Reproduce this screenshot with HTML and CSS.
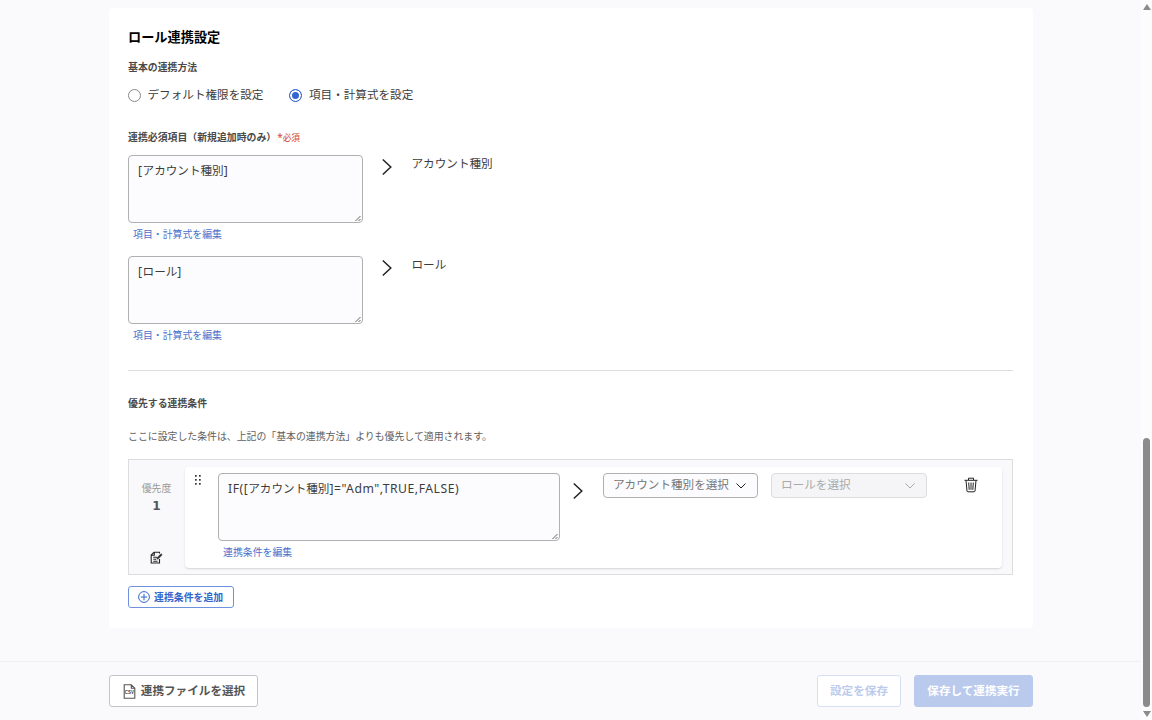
FILE: index.html
```html
<!DOCTYPE html>
<html lang="ja">
<head>
<meta charset="utf-8">
<title>ロール連携設定</title>
<link rel="stylesheet" href="styles.css">
</head>
<body>
<svg class="defs" width="0" height="0">
  <symbol id="chevron" viewBox="0 0 12 18"><path d="M1.8 1.500 9.800 9 1.800 16.500"/></symbol>
  <symbol id="caret" viewBox="0 0 12 8"><path d="M1.500 1.500 6 6 10.500 1.500"/></symbol>
  <symbol id="grip" viewBox="0 0 7 7"><path d="M.5 6 5.500 1M3.500 6 5.500 4"/></symbol>
</svg>
<div class="page">
  <main class="content">
    <section class="card">
      <h1 class="title">ロール連携設定</h1>
      <h2 class="label">基本の連携方法</h2>
      <div class="radios">
        <label class="radio"><span class="dot"></span>デフォルト権限を設定</label>
        <label class="radio"><span class="dot dot-on"></span>項目・計算式を設定</label>
      </div>
      <h2 class="label label-fields">連携必須項目（新規追加時のみ）<span class="required"><span class="star">*</span>必須</span></h2>
      <div class="mapping">
        <div class="field">
          <div class="area"><span class="code">[</span>アカウント種別<span class="code">]</span><svg class="grip"><use href="#grip"/></svg></div>
          <a class="link">項目・計算式を編集</a>
        </div>
        <svg class="chevron"><use href="#chevron"/></svg>
        <span class="target">アカウント種別</span>
      </div>
      <div class="mapping">
        <div class="field">
          <div class="area"><span class="code">[</span>ロール<span class="code">]</span><svg class="grip"><use href="#grip"/></svg></div>
          <a class="link">項目・計算式を編集</a>
        </div>
        <svg class="chevron"><use href="#chevron"/></svg>
        <span class="target">ロール</span>
      </div>
      <div class="divider"></div>
      <h2 class="label">優先する連携条件</h2>
      <p class="note">ここに設定した条件は、上記の「基本の連携方法」よりも優先して適用されます。</p>
      <div class="rules">
        <div class="priority">
          <span class="priority-name">優先度</span>
          <span class="priority-number">1</span>
          <svg class="memo" viewBox="0 0 13 13"><path d="M9.500 8V12H1.200V4L4 1.200H9.500V2.500M4.300 1.500V4.200H1.500M3.300 6.200H7M3.300 8.200H6M3.300 10.200H7.500"/><path d="M6.800 8.300 7.300 6.500 11 2.700 12.200 3.800 8.500 7.700Z" fill="#333" stroke-width=".5"/></svg>
        </div>
        <div class="rule">
          <svg class="handle" viewBox="0 0 6 10"><g fill="#333"><rect x="0" y="0" width="1.700" height="1.700"/><rect x="4" y="0" width="1.700" height="1.700"/><rect x="0" y="4" width="1.700" height="1.700"/><rect x="4" y="4" width="1.700" height="1.700"/><rect x="0" y="8" width="1.700" height="1.700"/><rect x="4" y="8" width="1.700" height="1.700"/></g></svg>
          <div class="field field-wide">
            <div class="area"><span class="code">IF([</span>アカウント種別<span class="code">]="Adm",TRUE,FALSE)</span><svg class="grip"><use href="#grip"/></svg></div>
            <a class="link">連携条件を編集</a>
          </div>
          <svg class="chevron"><use href="#chevron"/></svg>
          <div class="select select-account">アカウント種別を選択<svg class="caret"><use href="#caret"/></svg></div>
          <div class="select select-off">ロールを選択<svg class="caret"><use href="#caret"/></svg></div>
          <svg class="trash" viewBox="0 0 14 16"><path d="M.5 3.300H13.500M4.500 3V1.200H9.500V3M2 3.500 3 14Q3.100 14.800 4 14.800H10Q10.900 14.800 11 14L12 3.500M4.700 5.500 5.200 12.800M7 5.500V12.800M9.300 5.500 8.800 12.800"/></svg>
        </div>
      </div>
      <button class="add"><svg class="plus" viewBox="0 0 12 12"><circle cx="6" cy="6" r="5.400"/><path d="M6 2.800V9.200M2.800 6H9.200"/></svg>連携条件を追加</button>
    </section>
  </main>
  <footer class="footer">
    <button class="btn btn-file"><svg class="csv" viewBox="0 0 13 15"><path d="M1.200.8H8.300L11.800 4.200V14.200H1.200ZM8.300.8V4.200H11.800"/><text x="6.500" y="9.800" text-anchor="middle">CSV</text></svg>連携ファイルを選択</button>
    <button class="btn btn-save">設定を保存</button>
    <button class="btn btn-run">保存して連携実行</button>
  </footer>
</div>
<div class="scrollbar"><span class="arrow-up"></span><span class="thumb"></span><span class="arrow-down"></span></div>
</body>
</html>
```
FILE: styles.css
```css
* { box-sizing: border-box; }
body {
  display: flex;
  width: 1152px;
  height: 720px;
  margin: 0;
  overflow: hidden;
  background: #fafafc;
  color: #3c3c3c;
  font: 11.6px/16px "Noto Sans", "Noto Sans CJK JP", sans-serif;
  white-space: nowrap;
}
svg { display: block; flex: none; fill: none; stroke: #222; }
.defs { position: absolute; }
h1, h2, p { margin: 0; }
button { font-family: inherit; }
.page { display: flex; flex-direction: column; width: 1141px; }
.content { height: 662px; padding: 8px 0 0 109px; }
.card {
  display: flow-root;
  width: 924px;
  height: 620px;
  padding: 0 20px 0 19px;
  border-radius: 4px;
  background: #fff;
}
.title { margin-top: 19px; font-size: 13.2px; line-height: 20px; color: #000; }
.label { margin-top: 12px; font-size: 9.9px; line-height: 16px; color: #4a4a4a; }
.radios { display: flex; gap: 26px; margin-top: 12px; }
.radio { display: flex; align-items: center; height: 16px; }
.dot { width: 13px; height: 13px; margin-right: 6.5px; border: 1px solid #888; border-radius: 50%; background: #fff; }
.dot-on { border-color: #3466cf; background: #3466cf; box-shadow: inset 0 0 0 2px #fff; }
.label-fields { margin-top: 26px; }
.required { margin-left: 1px; color: #cf4535; font-size: 8.7px; font-weight: 400; line-height: 1; }
.star { font-size: 10px; line-height: 1; }
.mapping { display: flex; height: 101px; margin-top: 10px; }
.mapping + .mapping { margin-top: 0; }
.field { width: 234.5px; }
.area {
  position: relative;
  height: 68px;
  padding: 7px 9px;
  border: 1px solid #b0b0b0;
  border-radius: 4px;
  background: #fcfcfe;
}
.code { font-size: 12.2px; line-height: 1; letter-spacing: .53px; }
.grip { position: absolute; right: 0; bottom: 0; width: 7px; height: 7px; stroke: #555; stroke-width: .9; }
.link { display: block; margin: 3px 0 0 5px; color: #4a72cb; font-size: 9.9px; line-height: 16px; }
.chevron { width: 12px; height: 18px; margin: 3px 0 0 18px; stroke-width: 1.5; }
.target { margin-left: 19px; padding-top: 1px; }
.divider { height: 1px; margin-top: 13px; background: #ddd; }
.divider + .label { margin-top: 24px; }
.note { margin-top: 17px; font-size: 9.9px; line-height: 16px; color: #606060; }
.rules {
  display: flex;
  height: 116px;
  margin-top: 15px;
  padding: 7px 10px 6px 0;
  border: 1px solid #ddd;
  background: #f9f9fb;
}
.priority { display: flex; flex-direction: column; align-items: center; width: 55px; margin-right: 1px; padding-top: 13px; }
.priority-name { color: #999; font-size: 9.9px; }
.priority-number { margin-top: 2px; color: #555; font: bold 12px/16px "DejaVu Sans", sans-serif; }
.memo { width: 13px; height: 13px; margin-top: 37px; stroke-width: 1.1; }
.rule {
  display: flex;
  width: 817px;
  height: 101px;
  padding: 6px 0 0 10px;
  border-radius: 4px;
  background: #fff;
  box-shadow: 0 1px 2px rgba(0, 0, 0, .15);
}
.handle { width: 6px; height: 10px; margin-top: 2px; stroke: none; }
.field-wide { width: 342px; margin-left: 17px; }
.rule .chevron { margin: 9px 0 0 12px; }
.select {
  display: flex;
  align-items: center;
  justify-content: space-between;
  width: 155px;
  height: 25px;
  padding: 0 10px 2px 9px;
  border: 1px solid #b0b0b2;
  border-radius: 4px;
  background: #fcfcfe;
  color: #777;
}
.select-account { margin-left: 19px; }
.select-off { width: 156px; margin-left: 13px; border-color: #ddd; background: #f5f5f7; color: #aaa; }
.caret { width: 12px; height: 8px; margin-top: 3px; }
.select-off .caret { stroke: #aaa; }
.trash { width: 14px; height: 16px; margin: 4px 0 0 36.5px; }
.add {
  display: flex;
  align-items: center;
  gap: 4px;
  width: 106px;
  height: 22px;
  margin-top: 11px;
  padding: 0 0 0 9px;
  border: 1px solid #6f92df;
  border-radius: 3px;
  background: #fff;
  color: #3466c9;
  font-size: 9.9px;
  font-weight: 700;
}
.plus { width: 12px; height: 12px; stroke: #3466c9; }
.footer {
  display: flex;
  height: 58px;
  padding: 13px 0 0 109px;
  box-shadow: 0 -1px 1px rgba(0, 0, 0, .04);
  background: #fafafc;
}
.btn {
  display: flex;
  align-items: center;
  justify-content: center;
  height: 32px;
  padding: 0 0 2px;
  border: 1px solid #c4c4c6;
  border-radius: 3px;
  background: #fff;
  color: #555;
  font-size: 11.6px;
  font-weight: 700;
}
.btn-file { gap: 5px; width: 149px; padding-left: 1px; }
.csv { width: 13px; height: 15px; margin-top: 2px; stroke: #555; stroke-width: 1.100; }
.csv text { fill: #444; stroke: none; font: bold 4.500px "Liberation Sans", sans-serif; }
.btn-save { width: 84px; margin-left: 559px; border-color: #d5dff6; color: #bccbed; }
.btn-run { width: 119px; margin-left: 13px; border-color: #bacaed; background: #bacaed; color: #fff; }
.scrollbar { display: flex; flex-direction: column; align-items: center; width: 11px; background: #fcfcfc; }
.arrow-up { margin-top: 4px; border: 4px solid transparent; border-top: 0; border-bottom: 6px solid #8b8b8b; }
.thumb { width: 7px; height: 269px; margin-top: 428px; border-radius: 4px; background: #8b8b8b; }
.arrow-down { margin-top: 4px; border: 4px solid transparent; border-bottom: 0; border-top: 6px solid #8b8b8b; }
```
